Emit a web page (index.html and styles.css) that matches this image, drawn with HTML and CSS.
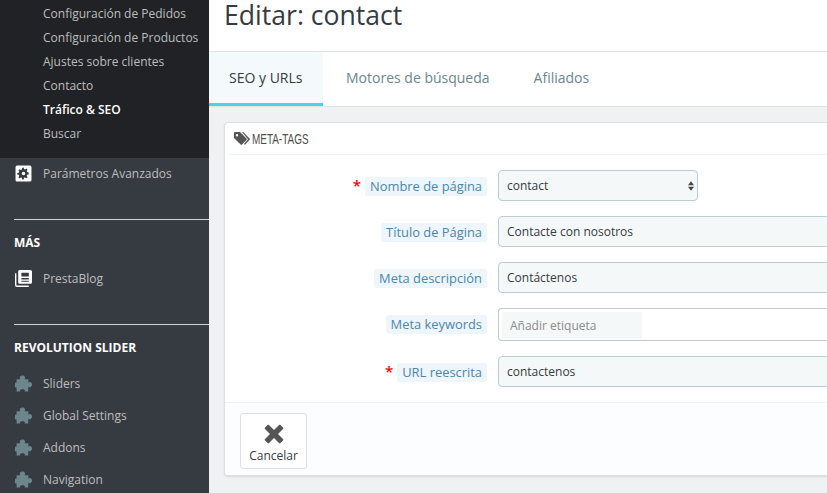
FILE: index.html
```html
<!DOCTYPE html>
<html lang="es">
<head>
<meta charset="utf-8">
<title>Editar: contact</title>
<link rel="stylesheet" href="styles.css">
</head>
<body>
<aside class="sidebar">
  <ul class="submenu">
    <li>Configuración de Pedidos</li>
    <li>Configuración de Productos</li>
    <li>Ajustes sobre clientes</li>
    <li>Contacto</li>
    <li class="current">Tráfico &amp; SEO</li>
    <li>Buscar</li>
  </ul>
  <div class="nav-item nav-first">
    <svg class="nav-icon" viewBox="0 0 16 16"><path fill="#fff" fill-rule="evenodd" d="M2 .5h12A1.500 1.500 0 0 1 15.500 2v12a1.500 1.500 0 0 1-1.500 1.500H2A1.500 1.500 0 0 1 .5 14V2A1.500 1.500 0 0 1 2 .5zM6.800 2.800l-.3 1.500-1 .4-1.300-.8-1 1 .8 1.300-.4 1-1.500.3v1.400l1.500.3.4 1-.8 1.300 1 1 1.300-.8 1 .4.300 1.500h1.400l.3-1.500 1-.4 1.300.8 1-1-.8-1.300.4-1 1.500-.3V7l-1.500-.3-.4-1 .8-1.300-1-1-1.300.8-1-.4-.3-1.500zM8 6.300a1.700 1.700 0 1 1 0 3.400 1.700 1.700 0 0 1 0-3.400z"/></svg>
    <span>Parámetros Avanzados</span>
  </div>
  <div class="section section-mas">
    <h2 class="section-title">MÁS</h2>
    <div class="nav-item">
      <svg class="nav-icon" viewBox="0 0 16 16"><path fill="#fff" fill-rule="evenodd" d="M4.500 0h10A1.500 1.500 0 0 1 16 1.500v10a1.500 1.500 0 0 1-1.500 1.500h-10A1.500 1.500 0 0 1 3 11.500v-10A1.500 1.500 0 0 1 4.500 0zM6 2.500V6h7V2.500zM6 7.500V9h7V7.500zM6 10v1h7v-1z"/><path fill="#fff" d="M0 3h1.300v11.200c0 .3.200.5.500.5H13V16H1.800A1.800 1.800 0 0 1 0 14.200z"/></svg>
      <span>PrestaBlog</span>
    </div>
  </div>
  <div class="section section-rev">
    <h2 class="section-title">REVOLUTION SLIDER</h2>
    <div class="nav-item puzzle">
      <svg class="nav-icon" viewBox="0 0 16 16"><path fill="#6c868e" d="M1.500 4H5C4.500 3.200 4.300 2.500 4.800 1.500 5.500 0 8.500 0 9.200 1.500 9.700 2.500 9.500 3.200 9 4h3.500v3c.8-.5 1.500-.7 2.300-.2 1.600.8 1.600 3.600 0 4.400-.8.500-1.500.3-2.300-.2v4.500H9c.5-1 .5-2.200-2-2.200s-2.500 1.200-2 2.200H1.500v-4c-.5.500-1.200.5-1.500-.5-.2-1-.2-2 0-3 .3-1 1-1 1.500-.5z"/></svg>
      <span>Sliders</span>
    </div>
    <div class="nav-item puzzle">
      <svg class="nav-icon" viewBox="0 0 16 16"><path fill="#6c868e" d="M1.500 4H5C4.500 3.200 4.300 2.500 4.800 1.500 5.500 0 8.500 0 9.200 1.500 9.700 2.500 9.500 3.200 9 4h3.500v3c.8-.5 1.500-.7 2.300-.2 1.600.8 1.600 3.600 0 4.400-.8.500-1.500.3-2.300-.2v4.500H9c.5-1 .5-2.200-2-2.200s-2.500 1.200-2 2.200H1.500v-4c-.5.500-1.200.5-1.500-.5-.2-1-.2-2 0-3 .3-1 1-1 1.500-.5z"/></svg>
      <span>Global Settings</span>
    </div>
    <div class="nav-item puzzle">
      <svg class="nav-icon" viewBox="0 0 16 16"><path fill="#6c868e" d="M1.500 4H5C4.500 3.200 4.300 2.500 4.800 1.500 5.500 0 8.500 0 9.200 1.500 9.700 2.500 9.500 3.200 9 4h3.500v3c.8-.5 1.500-.7 2.300-.2 1.600.8 1.600 3.600 0 4.400-.8.500-1.500.3-2.300-.2v4.500H9c.5-1 .5-2.200-2-2.200s-2.500 1.200-2 2.200H1.500v-4c-.5.500-1.200.5-1.500-.5-.2-1-.2-2 0-3 .3-1 1-1 1.500-.5z"/></svg>
      <span>Addons</span>
    </div>
    <div class="nav-item puzzle">
      <svg class="nav-icon" viewBox="0 0 16 16"><path fill="#6c868e" d="M1.500 4H5C4.500 3.200 4.300 2.500 4.800 1.500 5.500 0 8.500 0 9.200 1.500 9.700 2.500 9.500 3.200 9 4h3.500v3c.8-.5 1.500-.7 2.300-.2 1.600.8 1.600 3.600 0 4.400-.8.500-1.500.3-2.300-.2v4.500H9c.5-1 .5-2.200-2-2.200s-2.500 1.200-2 2.200H1.500v-4c-.5.500-1.200.5-1.500-.5-.2-1-.2-2 0-3 .3-1 1-1 1.500-.5z"/></svg>
      <span>Navigation</span>
    </div>
  </div>
</aside>
<main class="main">
  <header class="page-head"><h1>Editar: contact</h1></header>
  <nav class="tabs">
    <a class="tab active">SEO y URLs</a>
    <a class="tab">Motores de búsqueda</a>
    <a class="tab">Afiliados</a>
  </nav>
  <section class="panel">
    <div class="panel-head">
      <svg class="tag-icon" viewBox="0 0 16 13"><path fill="#555" fill-rule="evenodd" d="M1 0h5l6.500 6.500a1 1 0 0 1 0 1.400L8 12.500a1 1 0 0 1-1.400 0L0 6V1a1 1 0 0 1 1-1zm2 2a1.200 1.200 0 1 0 0 2.400A1.200 1.200 0 0 0 3 2z"/><path fill="#555" d="M8 0h1.200l6.300 6.500a1 1 0 0 1 0 1.400L11 12.800l-1-.8 4-4.800z"/></svg>
      <span class="panel-title">META-TAGS</span>
    </div>
    <div class="form">
      <div class="row">
        <div class="label-cell"><span class="req">*</span><span class="label">Nombre de página</span></div>
        <div class="field select">contact
          <svg class="arrows" viewBox="0 0 7 11"><path fill="#444" d="M3.500 0 7 4.500H0zM3.500 11 0 6.500h7z"/></svg>
        </div>
      </div>
      <div class="row">
        <div class="label-cell"><span class="label">Título de Página</span></div>
        <div class="field">Contacte con nosotros</div>
      </div>
      <div class="row">
        <div class="label-cell"><span class="label">Meta descripción</span></div>
        <div class="field">Contáctenos</div>
      </div>
      <div class="row row-tags">
        <div class="label-cell"><span class="label">Meta keywords</span></div>
        <div class="field tags"><span class="tag-input">Añadir etiqueta</span></div>
      </div>
      <div class="row">
        <div class="label-cell"><span class="req">*</span><span class="label">URL reescrita</span></div>
        <div class="field">contactenos</div>
      </div>
    </div>
    <footer class="panel-foot">
      <button class="cancel" type="button">
        <svg class="x-icon" viewBox="0 0 20 20"><path fill="#555" d="M5 1 10 6l5-5c.5-.5 1-.5 1.500 0L19 3.500c.5.500.5 1 0 1.500l-5 5 5 5c.5.500.5 1 0 1.500L16.500 19c-.5.500-1 .5-1.500 0l-5-5-5 5c-.5.500-1 .5-1.500 0L1 16.500c-.5-.5-.5-1 0-1.500l5-5-5-5c-.5-.5-.5-1 0-1.500L3.500 1C4 .5 4.500.5 5 1z"/></svg>
        <span>Cancelar</span>
      </button>
    </footer>
  </section>
</main>
</body>
</html>
```
FILE: styles.css
```css
* { box-sizing: border-box; }
html, body { height: 100%; margin: 0; }
body {
  display: flex;
  width: 827px;
  height: 493px;
  overflow: hidden;
  font-family: "Open Sans", sans-serif;
  font-size: 12px;
  color: #363a41;
  background: #eff1f2;
}
.sidebar {
  flex: 0 0 209px;
  background: #363a41;
  color: #bebebe;
  overflow: hidden;
}
.submenu {
  list-style: none;
  margin: 0;
  padding: 2px 0 12px 43px;
  background: #202226;
}
.submenu li { height: 24px; line-height: 24px; white-space: nowrap; }
.submenu .current { color: #fff; font-weight: 600; }
.nav-item {
  display: flex;
  align-items: center;
  height: 32px;
  padding-left: 15px;
  white-space: nowrap;
}
.nav-first { height: 30px; }
.nav-icon { width: 17px; height: 17px; margin-right: 11px; flex: none; }
.section { margin-left: 14px; border-top: 1px solid #c8d7dc; }
.section .nav-item { margin-left: -14px; }
.section-mas { margin-top: 31px; height: 105px; }
.section-title {
  margin: 14px 0 11px;
  font-size: 12px;
  line-height: 17px;
  font-weight: 700;
  color: #fff;
}
.main { flex: 1; min-width: 0; }
.page-head {
  height: 52px;
  background: #fff;
  border-bottom: 1px solid #dfe3e5;
  padding-left: 15px;
}
.page-head h1 {
  margin: 0;
  font-size: 26.6px;
  font-weight: 400;
  line-height: 30px;
  color: #363a41;
}
.tabs {
  display: flex;
  height: 55px;
  background: #fff;
  border-bottom: 1px solid #dfe3e5;
}
.tab {
  display: block;
  padding: 0 23px;
  font-size: 14px;
  line-height: 52px;
  color: #6c868e;
  margin-right: -2px;
}
.tab:first-child { padding: 0 20px; }
.tab.active {
  width: 114px;
  margin-right: 0;
  color: #363a41;
  background: #f4f9fb;
  border-bottom: 3px solid #4fd0ef;
}
.panel {
  margin: 15px -4px 0 15px;
  height: 354px;
  background: #fff;
  border: 1px solid #dbe1e4;
  border-radius: 4px;
  box-shadow: 0 1px 2px rgba(0,0,0,.1);
  overflow: hidden;
}
.panel-head {
  display: flex;
  align-items: center;
  height: 32px;
  margin: 0 0 0 4px;
  padding-left: 5px;
  border-bottom: 1px solid #eef0f1;
  font-family: "Liberation Sans", sans-serif;
  font-size: 14px;
  color: #4d4d4d;
}
.panel-title { transform: scaleX(.71); transform-origin: left center; }
.tag-icon { width: 16px; height: 13px; margin-right: 2px; }
.form { height: 247px; padding-top: 15px; }
.row { display: flex; align-items: center; height: 31px; margin-bottom: 15px; }
.row-tags { height: 33px; margin-bottom: 15px; }
.label-cell {
  flex: 0 0 262px;
  display: flex;
  justify-content: flex-end;
  align-items: center;
  padding-top: 2px;
}
.row-tags .label-cell { padding-top: 0; }
.req {
  margin: 0 4px 2px 0;
  color: #f00;
  font-size: 15px;
  line-height: 15px;
  font-weight: 600;
}
.label {
  padding: 0 5px;
  height: 19px;
  line-height: 19px;
  font-size: 12.9px;
  color: #4a86b0;
  background: #eff6fb;
  border-radius: 2px;
}
.field {
  position: relative;
  flex: 1;
  margin-left: 11px;
  height: 31px;
  line-height: 30px;
  padding-left: 8px;
  background: #f5f8f9;
  border: 1px solid #bbcdd2;
  border-radius: 4px;
  font-size: 12px;
  white-space: nowrap;
}
.select { flex: 0 0 200px; }
.arrows { position: absolute; right: 3px; top: 10px; width: 6px; height: 10px; }
.tags {
  height: 33px;
  padding: 3px;
  background: #fff;
  border-color: #c7c7c7;
  border-width: 1px 0 1px 1px;
}
.tag-input {
  display: block;
  width: 140px;
  height: 27px;
  line-height: 27px;
  padding-left: 8px;
  background: #f5f8f9;
  border-radius: 2px;
  color: #8b8b8b;
}
.panel-foot {
  height: 74px;
  padding: 10px 15px;
  background: #fcfdfe;
  border-top: 1px solid #eef0f1;
}
.cancel {
  display: flex;
  flex-direction: column;
  align-items: center;
  width: 67px;
  height: 56px;
  padding: 10px 0 0;
  background: #fff;
  border: 1px solid #dbe1e4;
  border-radius: 3px;
  font-family: inherit;
  font-size: 12px;
  color: #363a41;
}
.x-icon { width: 20px; height: 20px; margin-bottom: 3px; }
```
